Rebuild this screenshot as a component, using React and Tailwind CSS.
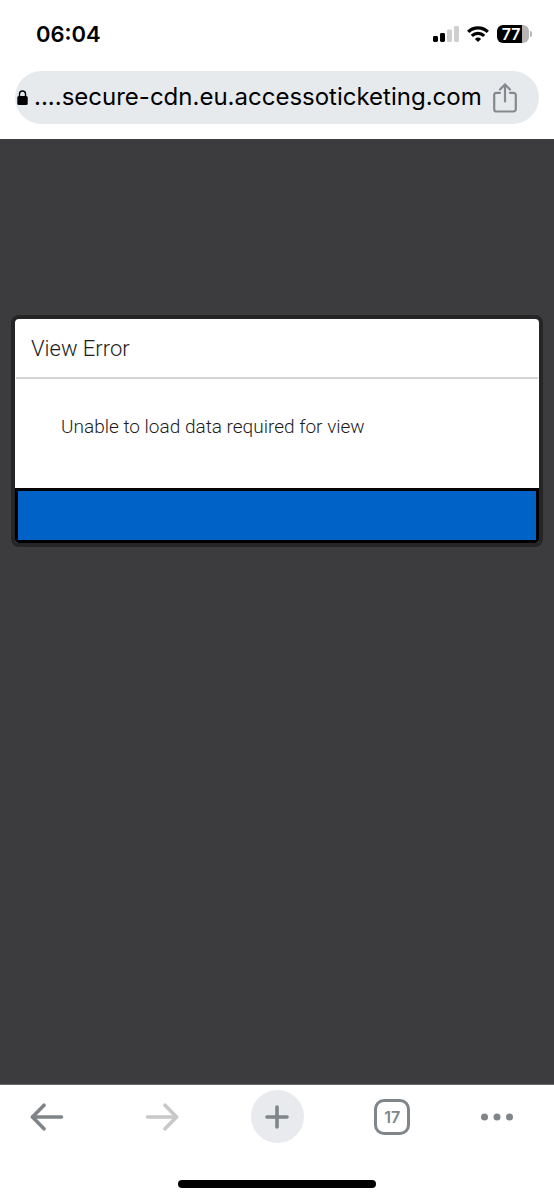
import React, { useState } from 'react';

const SignalIcon = () => (
    <svg width="26" height="16" viewBox="0 0 26 16" aria-hidden="true">
        <rect x="0" y="10" width="5" height="6" rx="1.4" fill="#000" />
        <rect x="7" y="7" width="5" height="9" rx="1.4" fill="#000" />
        <rect x="14" y="3.5" width="5" height="12.5" rx="1.4" fill="#cfcfcf" />
        <rect x="21" y="0" width="5" height="16" rx="1.4" fill="#cfcfcf" />
    </svg>
);

const WifiIcon = () => (
    <svg width="22" height="16" viewBox="0 0 22 16" fill="none" stroke="#000" strokeWidth="3.2" aria-hidden="true">
        <path d="M1.2 5.8a14 14 0 0 1 19.6 0" />
        <path d="M4.8 9.8a9 9 0 0 1 12.4 0" />
        <path d="M11 16l-3.1-3.1a4.4 4.4 0 0 1 6.2 0z" fill="#000" stroke="none" />
    </svg>
);

const LockIcon = () => (
    <svg width="11" height="15" viewBox="0 0 11 15" className="shrink-0" aria-hidden="true">
        <path d="M2.5 7V4a3 3 0 0 1 6 0v3" fill="none" stroke="#000" strokeWidth="1.4" />
        <rect x="0.3" y="6" width="10.4" height="9" rx="1.5" fill="#000" />
    </svg>
);

const ShareIcon = () => (
    <svg
        width="24"
        height="30"
        viewBox="0 0 24 30"
        fill="none"
        stroke="#85898d"
        strokeWidth="2.2"
        strokeLinecap="round"
        strokeLinejoin="round"
        aria-hidden="true"
    >
        <path d="M7 9.8H3.5a2.3 2.3 0 0 0-2.3 2.3v14.1a2.3 2.3 0 0 0 2.3 2.3h17a2.3 2.3 0 0 0 2.3-2.3V12.1a2.3 2.3 0 0 0-2.3-2.3H17" />
        <path d="M12 18.5V1.5" />
        <path d="M7 6.5l5-5 5 5" />
    </svg>
);

const ArrowIcon = ({ className }) => (
    <svg
        width="34"
        height="28"
        viewBox="0 0 34 28"
        fill="none"
        stroke="currentColor"
        strokeWidth="3.6"
        strokeLinecap="round"
        strokeLinejoin="round"
        className={className}
        aria-hidden="true"
    >
        <path d="M31.5 14H2.5" />
        <path d="M14 2.2L2.5 14 14 25.8" />
    </svg>
);

const StatusBar = () => (
    <div className="flex h-[68px] items-center justify-between pl-9 pr-[22px]">
        <span className="text-[22px] leading-7 font-semibold">06:04</span>
        <div className="flex items-center gap-2">
            <SignalIcon />
            <WifiIcon />
            <div className="flex items-center gap-px">
                <div className="flex h-[18px] w-8 items-center justify-center rounded-md bg-linear-to-r from-black from-78% to-[#b4b4b4] to-78% pr-1 text-base leading-5 font-semibold text-white">
                    77
                </div>
                <div className="h-1.5 w-0.5 rounded-r-full bg-[#b4b4b4]" />
            </div>
        </div>
    </div>
);

const AddressBar = () => (
    <div className="mx-[15px] mt-[3px] mb-[15px] flex h-[53px] items-center rounded-full bg-[#e7eaed] pl-0.5 pr-[22px]">
        <LockIcon />
        <input
            type="text"
            aria-label="Address"
            defaultValue="....secure-cdn.eu.accessoticketing.com"
            className="ml-1.5 min-w-0 flex-1 bg-transparent pb-0.5 text-[24px] leading-8 outline-none"
        />
        <button type="button" aria-label="Share" className="shrink-0">
            <ShareIcon />
        </button>
    </div>
);

const ErrorDialog = ({ onClose }) => (
    <div
        role="alertdialog"
        aria-labelledby="dialog-title"
        aria-describedby="dialog-text"
        className="rounded-lg bg-[#252525] p-1 font-[Roboto,sans-serif] font-light text-[#1c1c1c]"
    >
        <div className="overflow-hidden rounded-sm bg-white">
            <h1 id="dialog-title" className="mx-px border-b-2 border-[#d3d3d3] px-[15px] pt-4 pb-3.5 text-[22px] leading-7">
                View Error
            </h1>
            <p id="dialog-text" className="px-[46px] pt-[34px] pb-[47px] text-[19px] leading-7">
                Unable to load data required for view
            </p>
            <button
                type="button"
                aria-label="Close"
                onClick={onClose}
                className="block h-[55px] w-full border-3 border-black bg-[#0061c6]"
            />
        </div>
    </div>
);

const Toolbar = () => (
    <nav className="border-t border-[#6b6b6c] bg-white">
        <div className="flex items-center justify-between px-5 pt-[5px] text-[#7f8588]">
            <button type="button" aria-label="Back" className="flex size-[53px] items-center justify-center">
                <ArrowIcon />
            </button>
            <button
                type="button"
                aria-label="Forward"
                className="flex size-[53px] items-center justify-center text-[#c8c8c8]"
            >
                <ArrowIcon className="rotate-180" />
            </button>
            <button
                type="button"
                aria-label="New tab"
                className="flex size-[53px] items-center justify-center rounded-full bg-[#e9eaee]"
            >
                <svg width="24" height="24" viewBox="0 0 24 24" stroke="currentColor" strokeWidth="3.6" strokeLinecap="round" aria-hidden="true">
                    <path d="M12 2v20M2 12h20" />
                </svg>
            </button>
            <button type="button" aria-label="Tabs" className="flex size-[53px] items-center justify-center">
                <span className="flex size-9 items-center justify-center rounded-[10px] border-3 border-current text-base leading-5 font-semibold">
                    17
                </span>
            </button>
            <button type="button" aria-label="More" className="flex size-[53px] items-center">
                <svg width="34" height="8" viewBox="0 0 34 8" fill="currentColor" aria-hidden="true">
                    <circle cx="3.5" cy="4" r="3.5" />
                    <circle cx="16" cy="4" r="3.5" />
                    <circle cx="28.5" cy="4" r="3.5" />
                </svg>
            </button>
        </div>
        <div className="mx-auto mt-[37px] mb-3 h-2 w-[198px] rounded-full bg-black" />
    </nav>
);

const App = () => {
    const [open, setOpen] = useState(true);

    return (
        <div className="flex min-h-screen flex-col bg-white font-[Inter,sans-serif] text-black">
            <header>
                <StatusBar />
                <AddressBar />
            </header>
            <main className="flex-1 bg-[#3c3c3e] px-[11px] pt-44">
                {open && <ErrorDialog onClose={() => setOpen(false)} />}
            </main>
            <Toolbar />
        </div>
    );
};

export default App;
